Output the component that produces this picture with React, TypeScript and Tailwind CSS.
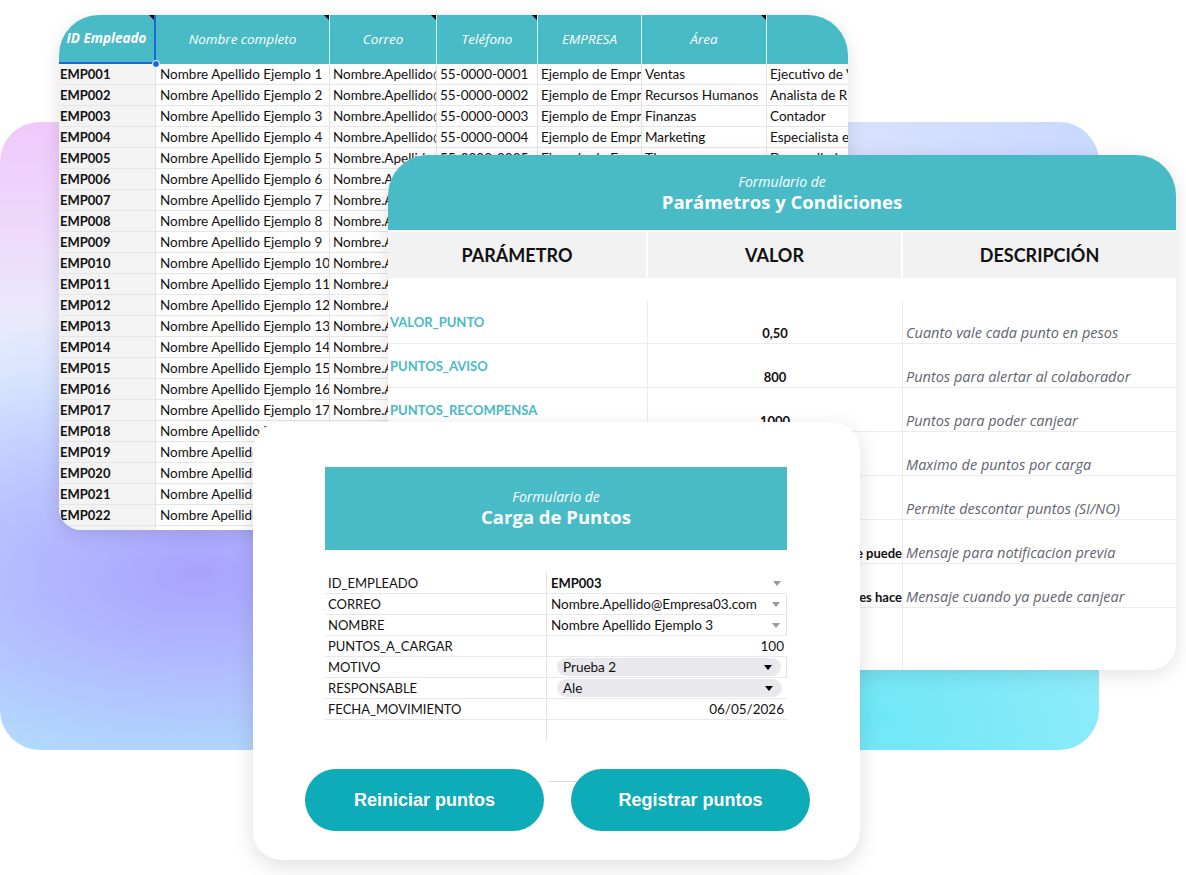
import React from "react";

const areas = ["Ventas", "Recursos Humanos", "Finanzas", "Marketing", "TI", "Operaciones", "Compras", "Logística"];
const puestos = ["Ejecutivo de Ventas", "Analista de RH", "Contador", "Especialista en Marketing", "Desarrollador", "Coordinador", "Comprador", "Supervisor"];

const pad = (n: number) => (n < 10 ? "0" + n : "" + n);

function Tri() {
  return <div className="absolute top-0 right-0 w-0 h-0 border-t-[5px] border-t-black border-l-[5px] border-l-transparent" />;
}

function Sheet() {
  const rows = Array.from({ length: 23 }, (_, i) => i + 1);
  const cols = [97, 174, 107, 101, 104, 125, 200];
  const heads = ["ID Empleado", "Nombre completo", "Correo", "Teléfono", "EMPRESA", "Área", "Puesto"];
  const marks = [true, true, true, true, false, true, false];
  return (
    <div className="absolute left-[59px] top-[15px] w-[789px] h-[515px] overflow-hidden rounded-tl-[40px] rounded-tr-[40px] rounded-bl-[22px] bg-white shadow-[0_4px_18px_rgba(0,0,0,0.12)] font-['Lato',sans-serif] text-[13.5px] text-[#111]">
      <div className="flex h-[49px] bg-[#48bbc6] font-['Open_Sans',sans-serif] text-[13.5px]">
        {heads.map((h, i) => (
          <div
            key={h}
            style={{ width: cols[i] }}
            className={
              "relative shrink-0 flex items-center justify-center italic text-white whitespace-nowrap border-r border-white/80 " +
              (i === 0 ? "font-bold border-r-2 border-r-[#1a66e0] border-b-2 border-b-[#1a66e0]" : "")
            }
          >
            {h}
            {marks[i] && <Tri />}
          </div>
        ))}
      </div>
      {rows.map((n) => (
        <div key={n} className="flex h-[21px] border-b border-[#e6e6e6] leading-[20px]">
          <div style={{ width: cols[0] }} className="shrink-0 bg-[#f3f3f3] font-bold text-[13px] pl-[1px] overflow-hidden whitespace-nowrap border-r border-[#e2e2e2]">
            EMP0{pad(n)}
          </div>
          <div style={{ width: cols[1] }} className="shrink-0 pl-[4px] overflow-hidden whitespace-nowrap border-r border-[#e2e2e2]">
            Nombre Apellido Ejemplo {n}
          </div>
          <div style={{ width: cols[2] }} className="shrink-0 pl-[3px] overflow-hidden whitespace-nowrap border-r border-[#e2e2e2]">
            Nombre.Apellido@Empresa{pad(n)}.com
          </div>
          <div style={{ width: cols[3] }} className="shrink-0 pl-[3px] overflow-hidden whitespace-nowrap border-r border-[#e2e2e2]">
            55-0000-00{pad(n)}
          </div>
          <div style={{ width: cols[4] }} className="shrink-0 pl-[3px] overflow-hidden whitespace-nowrap border-r border-[#e2e2e2]">
            Ejemplo de Empresa {pad(n)}
          </div>
          <div style={{ width: cols[5] }} className="shrink-0 pl-[3px] overflow-hidden whitespace-nowrap border-r border-[#e2e2e2]">
            {areas[(n - 1) % areas.length]}
          </div>
          <div style={{ width: cols[6] }} className="shrink-0 pl-[3px] overflow-hidden whitespace-nowrap">
            {puestos[(n - 1) % puestos.length]}
          </div>
        </div>
      ))}
      <div className="absolute left-[93px] top-[45px] w-[8px] h-[8px] rounded-full bg-[#1a66e0] border border-white" />
    </div>
  );
}

const params = [
  ["VALOR_PUNTO", "0,50", "Cuanto vale cada punto en pesos", ""],
  ["PUNTOS_AVISO", "800", "Puntos para alertar al colaborador", ""],
  ["PUNTOS_RECOMPENSA", "1000", "Puntos para poder canjear", ""],
  ["MAX_PUNTOS_CARGA", "500", "Maximo de puntos por carga", ""],
  ["PERMITE_DESCONTAR", "SI", "Permite descontar puntos (SI/NO)", ""],
  ["MENSAJE_AVISO", "Te faltan pocos puntos para que puede", "Mensaje para notificacion previa", "end"],
  ["MENSAJE_RECOMPENSA", "Felicidades ya puedes hace", "Mensaje cuando ya puede canjear", "end"],
];

function Params() {
  return (
    <div className="absolute left-[388px] top-[155px] w-[788px] h-[515px] overflow-hidden rounded-tl-[40px] rounded-tr-[40px] rounded-br-[26px] bg-white shadow-[0_4px_20px_rgba(0,0,0,0.12)] font-['Lato',sans-serif] text-[#111] flex flex-col">
      <div className="h-[75px] bg-[#48bbc6] flex flex-col items-center justify-center text-white shrink-0 font-['Open_Sans',sans-serif]">
        <div className="italic text-[14px] leading-[17px] mt-[1px]">Formulario de</div>
        <div className="font-bold text-[18.5px] leading-[24px]">Parámetros y Condiciones</div>
      </div>
      <div className="h-[2px] bg-white shrink-0" />
      <div className="flex h-[46px] bg-[#f2f2f2] shrink-0 font-bold text-[18px]">
        <div className="w-[260px] flex items-center justify-center border-r-2 border-white">PARÁMETRO</div>
        <div className="w-[255px] flex items-center justify-center border-r-2 border-white">VALOR</div>
        <div className="flex-1 flex items-center justify-center">DESCRIPCIÓN</div>
      </div>
      <div className="h-[22px] shrink-0" />
      {params.map(([p, v, d, al]) => (
        <div key={p} className="flex h-[44px] border-b border-[#ececec] shrink-0">
          <div className="w-[260px] pl-[2px] pt-[14px] text-[13px] leading-[16px] font-bold text-[#48bbc6] border-r border-[#ececec]">{p}</div>
          <div
            className={
              "w-[255px] flex items-end pb-[2px] text-[13px] leading-[16px] font-bold overflow-hidden whitespace-nowrap border-r border-[#ececec] " +
              (al === "end" ? "justify-end" : "justify-center")
            }
          >
            <span className="shrink-0">{v}</span>
          </div>
          <div className="flex-1 flex items-end pl-[3px] pb-[1px] text-[14.5px] leading-[18px] italic text-[#5f6470] whitespace-nowrap font-['Open_Sans',sans-serif]">{d}</div>
        </div>
      ))}
      <div className="flex flex-1">
        <div className="w-[260px] border-r border-[#ececec]" />
        <div className="w-[255px] border-r border-[#ececec]" />
      </div>
    </div>
  );
}

function Arrow({ dark }: { dark?: boolean }) {
  return (
    <div
      className={
        "w-0 h-0 border-l-[4px] border-r-[4px] border-t-[5px] border-l-transparent border-r-transparent " +
        (dark ? "border-t-black" : "border-t-[#9a9a9a]")
      }
    />
  );
}

const formRows: { label: string; value: string; kind: "drop" | "num" | "pill"; bold?: boolean; rb?: boolean }[] = [
  { label: "ID_EMPLEADO", value: "EMP003", kind: "drop", bold: true },
  { label: "CORREO", value: "Nombre.Apellido@Empresa03.com", kind: "drop", rb: true },
  { label: "NOMBRE", value: "Nombre Apellido Ejemplo 3", kind: "drop", rb: true },
  { label: "PUNTOS_A_CARGAR", value: "100", kind: "num" },
  { label: "MOTIVO", value: "Prueba 2", kind: "pill", rb: true },
  { label: "RESPONSABLE", value: "Ale", kind: "pill" },
  { label: "FECHA_MOVIMIENTO", value: "06/05/2026", kind: "num" },
];

function Carga() {
  return (
    <div className="absolute left-[253px] top-[422px] w-[607px] h-[438px] rounded-[28px] bg-white shadow-[0_6px_22px_rgba(0,0,0,0.13)] font-['Lato',sans-serif] text-[#111] pt-[45px] pl-[72px]">
      <div className="w-[462px] h-[83px] bg-[#48bbc6] flex flex-col items-center justify-center text-white font-['Open_Sans',sans-serif]">
        <div className="italic text-[14px] leading-[17px]">Formulario de</div>
        <div className="font-bold text-[18.5px] leading-[24px]">Carga de Puntos</div>
      </div>
      <div className="mt-[23px] w-[462px] text-[13px]">
        {formRows.map((r) => (
          <div key={r.label} className="flex h-[21px] border-b border-[#e8e8e8] leading-[20px]">
            <div className="w-[222px] pl-[3px] border-r border-[#e0e0e0] whitespace-nowrap">{r.label}</div>
            <div className={"flex-1 flex items-center text-[13.5px] " + (r.rb ? "border-r border-[#e0e0e0]" : "")}>
              {r.kind === "drop" && (
                <div className="flex-1 flex items-center justify-between pl-[4px] pr-[6px]">
                  <span className={"whitespace-nowrap " + (r.bold ? "font-bold text-[13px]" : "")}>{r.value}</span>
                  <Arrow />
                </div>
              )}
              {r.kind === "num" && <div className="flex-1 text-right pr-[3px]">{r.value}</div>}
              {r.kind === "pill" && (
                <div className="ml-[10px] mr-[5px] flex-1 h-[18px] rounded-full bg-[#e8e8ed] flex items-center justify-between pl-[6px] pr-[9px]">
                  <span className="leading-[18px]">{r.value}</span>
                  <Arrow dark />
                </div>
              )}
            </div>
          </div>
        ))}
        <div className="flex h-[20px]">
          <div className="w-[222px] border-r border-[#e0e0e0]" />
        </div>
      </div>
      <div className="relative mt-[29px] -ml-[20px] flex gap-[27px] font-['Liberation_Sans',sans-serif]">
        <div className="absolute left-[242px] top-[12px] w-[60px] h-px bg-[#dcdcdc]" />
        <button className="relative w-[239px] h-[62px] rounded-full bg-[#0eacb8] text-white font-bold text-[18px]">Reiniciar puntos</button>
        <button className="relative w-[239px] h-[62px] rounded-full bg-[#0eacb8] text-white font-bold text-[18px]">Registrar puntos</button>
      </div>
    </div>
  );
}

export default function App() {
  return (
    <div className="relative w-[1186px] h-[875px] bg-white overflow-hidden">
      <div className="absolute left-0 top-[122px] w-[1099px] h-[628px] rounded-[40px] bg-[radial-gradient(ellipse_at_18%_72%,#a9a2ff_0%,rgba(169,162,255,0.6)_18%,rgba(169,162,255,0)_42%),radial-gradient(ellipse_at_80%_95%,#6fe7f7_0%,rgba(111,231,247,0)_45%),radial-gradient(ellipse_at_2%_0%,#f0c8fb_0%,rgba(240,200,251,0)_30%),radial-gradient(ellipse_at_100%_0%,#c8d8ff_0%,rgba(200,216,255,0)_40%),linear-gradient(180deg,#eef0fd_0%,#e4f6fd_40%,#b4f0fe_100%)]" />
      <Sheet />
      <Params />
      <Carga />
    </div>
  );
}
